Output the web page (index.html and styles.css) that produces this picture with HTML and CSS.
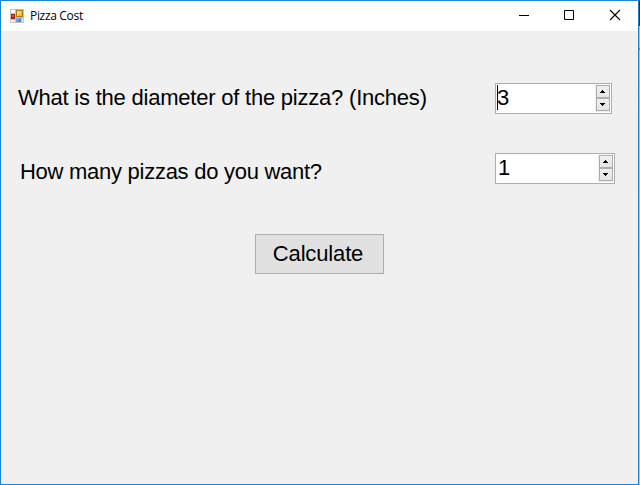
FILE: index.html
```html
<!DOCTYPE html>
<html lang="en">
<head>
<meta charset="utf-8">
<title>Pizza Cost</title>
<link rel="stylesheet" href="styles.css">
</head>
<body>
<div class="desktop">
  <main class="window">
    <header class="titlebar">
      <svg class="app-icon" width="14" height="14" viewBox="0 0 14 14" shape-rendering="crispEdges">
        <defs>
          <linearGradient id="gold" x2="1" y2="1"><stop stop-color="#ffeb91"/><stop offset="1" stop-color="#edae00"/></linearGradient>
          <linearGradient id="blue" x2="1" y2="1"><stop stop-color="#8fbcff"/><stop offset="1" stop-color="#3574df"/></linearGradient>
        </defs>
        <path fill="#c3c3c3" d="M0 0h14v14H0z"/>
        <path fill="#fff" d="M1 1h4v3H1zM1 11h4v2H1zM12 10h1v3h-1z"/>
        <path fill="#a51d16" d="M1 5h4v5H1z"/>
        <path fill="#db5a50" d="M2 6h2v2H2z"/>
        <path fill="#a87a10" d="M6 1h7v7H6z"/>
        <path fill="url(#gold)" d="M7 2h5v5H7z"/>
        <path fill="url(#blue)" d="M6 9h5v4H6z"/>
      </svg>
      <span class="title">Pizza Cost</span>
      <div class="controls">
        <svg width="46" height="29" viewBox="0 0 46 29"><path d="M18 14.5h10" stroke="#000"/></svg>
        <svg width="46" height="29" viewBox="0 0 46 29"><path d="M17.5 9.5h9v9h-9z" fill="none" stroke="#000"/></svg>
        <svg width="46" height="29" viewBox="0 0 46 29"><path d="M17 9l10 10M27 9L17 19" stroke="#000" stroke-width="1.1"/></svg>
      </div>
    </header>
    <section class="form">
      <div class="row diameter">
        <span class="label">What is the diameter of the pizza? (Inches)</span>
        <div class="number">
          <span class="caret"></span><span class="value">3</span>
          <div class="spinner">
            <svg class="step" viewBox="0 0 12 11"><path d="M5 4h1v1h1v1h1v1H3V6h1V5h1z"/></svg>
            <svg class="step" viewBox="0 0 12 11"><path d="M3 4h5v1H7v1H6v1H5V6H4V5H3z"/></svg>
          </div>
        </div>
      </div>
      <div class="row quantity">
        <span class="label">How many pizzas do you want?</span>
        <div class="number">
          <span class="value">1</span>
          <div class="spinner">
            <svg class="step" viewBox="0 0 12 11"><path d="M5 4h1v1h1v1h1v1H3V6h1V5h1z"/></svg>
            <svg class="step" viewBox="0 0 12 11"><path d="M3 4h5v1H7v1H6v1H5V6H4V5H3z"/></svg>
          </div>
        </div>
      </div>
      <button class="calculate">Calculate</button>
    </section>
  </main>
  <div class="behind"></div>
</div>
</body>
</html>
```
FILE: styles.css
```css
* { box-sizing: border-box; }
body { margin: 0; }
.desktop {
  display: flex;
  width: 640px;
  height: 485px;
  overflow: hidden;
}
.window {
  width: 639px;
  height: 485px;
  border: 1px solid #1883d7;
  background: #f0f0f0;
  color: #000;
  font-family: "Liberation Sans", Arial, sans-serif;
}
.behind {
  width: 1px;
  background: linear-gradient(#14233a 26px, #9ccbee 26px, #9ccbee 48px, #5f93c4 48px, #5f93c4 50px, #a5cae8 50px, #b4cde0);
}
.titlebar {
  display: flex;
  align-items: center;
  height: 30px;
  padding-left: 9px;
  background: #fff;
}
.app-icon { flex: none; margin-top: -1px; }
.title {
  margin-left: 6px;
  font: 12px/16px "Open Sans", "Noto Sans", sans-serif;
  letter-spacing: -0.32px;
}
.controls {
  display: flex;
  height: 30px;
  margin-left: auto;
  margin-right: -1px;
}
.form { padding-top: 52px; }
.row {
  display: flex;
  justify-content: space-between;
  height: 31px;
  font-size: 22px;
  line-height: 29px;
}
.diameter { padding-left: 17px; }
.quantity { padding-left: 19px; margin-top: 39px; }
.label { white-space: nowrap; letter-spacing: -0.22px; }
.quantity .label { padding-top: 4px; letter-spacing: -0.27px; }
.number {
  display: flex;
  height: 31px;
  padding: 1px;
  border: 1px solid #abadb3;
  background: #fff;
}
.diameter .number { width: 117px; margin-right: 26px; }
.quantity .number { width: 120px; margin-right: 23px; }
.caret { width: 1px; height: 25px; background: #000; }
.value { margin-left: -1px; line-height: 25px; }
.quantity .value { margin-left: 1px; }
.spinner {
  display: flex;
  flex-direction: column;
  width: 15px;
  height: 27px;
  margin-left: auto;
  padding: 0 0 1px 1px;
  background: #f0f0f0;
}
.step {
  width: 14px;
  height: 13px;
  border: 1px solid #acacac;
  background: linear-gradient(#f0f0f0, #e5e5e5);
  shape-rendering: crispEdges;
}
.calculate {
  display: block;
  width: 129px;
  height: 40px;
  margin: 50px 0 0 254px;
  padding: 0 3px 0 0;
  border: 1px solid #adadad;
  border-radius: 0;
  background: #e1e1e1;
  color: #000;
  font: 22px "Liberation Sans", Arial, sans-serif;
  letter-spacing: -0.15px;
}
```
